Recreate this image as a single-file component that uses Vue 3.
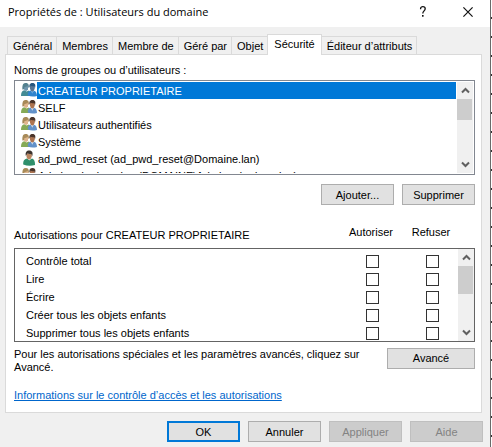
<script setup>
import { ref } from 'vue'

const tabs = ['Général', 'Membres', 'Membre de', 'Géré par', 'Objet', 'Sécurité', 'Éditeur d’attributs']
const activeTab = ref('Sécurité')

const principals = [
  { name: 'CREATEUR PROPRIETAIRE', kind: 'group' },
  { name: 'SELF', kind: 'group' },
  { name: 'Utilisateurs authentifiés', kind: 'group' },
  { name: 'Système', kind: 'group' },
  { name: 'ad_pwd_reset (ad_pwd_reset@Domaine.lan)', kind: 'user' },
  { name: 'Admins du domaine (DOMAINE\\Admins du domaine)', kind: 'group' },
]
const selected = ref(0)

const permissions = ref([
  { label: 'Contrôle total', allow: false, deny: false },
  { label: 'Lire', allow: false, deny: false },
  { label: 'Écrire', allow: false, deny: false },
  { label: 'Créer tous les objets enfants', allow: false, deny: false },
  { label: 'Supprimer tous les objets enfants', allow: false, deny: false },
])
</script>

<template>
  <div class="desktop">
    <main class="dialog">
      <header class="titlebar">
        <h1>Propriétés de : Utilisateurs du domaine</h1>
        <button class="caption" type="button" aria-label="Aide contextuelle">
          <svg width="10" height="14" viewBox="0 0 10 14"><path d="M2.6 4.2V3.6C2.6 2.3 3.6 1.7 4.8 1.7S7.2 2.4 7.2 3.8C7.2 5.9 4.8 6 4.8 8.6" fill="none" stroke="#111" stroke-width="1.3" /><rect x="4" y="10" width="1.6" height="1.7" fill="#111" /></svg>
        </button>
        <button class="caption close" type="button" aria-label="Fermer">
          <svg width="10" height="10" viewBox="0 0 10 10"><path d="M0.4 0.4L9.6 9.6M9.6 0.4L0.4 9.6" stroke="#111" stroke-width="1.2" /></svg>
        </button>
      </header>

      <div class="body">
        <div class="tabs" role="tablist">
          <button
            v-for="tab in tabs"
            :key="tab"
            class="tab"
            :class="{ active: tab === activeTab }"
            type="button"
            role="tab"
            :aria-selected="tab === activeTab"
            @click="activeTab = tab"
          >{{ tab }}</button>
        </div>

        <section class="panel">
          <p class="label" id="names">Noms de groupes ou d’utilisateurs :</p>
          <div class="box principals">
            <ul role="listbox" aria-labelledby="names">
              <li
                v-for="(p, i) in principals"
                :key="p.name"
                role="option"
                :aria-selected="i === selected"
                :class="{ selected: i === selected }"
                @click="selected = i"
              >
                <svg v-if="p.kind === 'group'" class="icon" width="16" height="16" viewBox="0 0 16 16">
                  <path class="g-body" d="M0 14C0 10.5 1 8.8 3.4 8.3L5.5 9.4L8 8.4L10 14H1Q0 14 0 14Z" />
                  <path class="g-face" d="M2.8 3.5H7V7.2Q6.4 8.9 5 8.9T2.8 7Z" />
                  <path class="g-hair" d="M1.4 7.4C1.2 3 2 1 4.8 1S8.2 3.2 7.8 6.3C7.2 5.5 6.8 4.5 6.5 3.7C5.4 4.8 4.2 5 3.4 5.1C3.4 6.8 3 7.8 1.4 7.4Z" />
                  <path class="b-body" d="M6.8 13.6C6.6 11 7.4 9.4 9.3 8.6L11.3 10L13.3 8.8C15.2 9.4 16 11.5 16 14Q11 15.2 6.8 13.6Z" />
                  <path class="b-shirt" d="M9.8 8.6L11.3 11.8L12.6 8.6Z" />
                  <path class="b-face" d="M9 3.6H13.7V6.8Q13 9.6 11.3 9.6T9 6.8Z" />
                  <path class="b-hair" d="M8.6 5.8C7.8 2.6 9.2 1 11.5 1C14.4 1 14.9 3.3 14 6.2L13.3 4.2Q11 4.2 9.6 3.7Z" />
                </svg>
                <svg v-else class="icon" width="16" height="16" viewBox="0 0 16 16">
                  <path fill="#2f8f6b" d="M2.2 14.5C2 11.4 3 9.3 5.8 8.6L8.6 10L11 8.6C13.4 9.4 14.2 12 14 15Q8 16.6 2.2 14.5Z" />
                  <path fill="#e7eee9" d="M6 8.2L8.4 10.6L9.6 8.2Z" />
                  <path fill="#b98560" d="M5.5 3.6H10.8V6.6Q10 9.6 8 9.6T5.5 6.6Z" />
                  <path fill="#3c332d" d="M4.9 6C4 2.2 5.6 0.4 8.2 0.4C11.4 0.4 12.2 2.8 11.2 6.2L10.3 3.9Q8 4.2 6.3 3.5Z" />
                </svg>
                <span>{{ p.name }}</span>
              </li>
            </ul>
            <div class="scrollbar">
              <button type="button" aria-label="Défiler vers le haut"><svg width="9" height="7" viewBox="0 0 9 7"><path d="M1 5.5L4.5 2L8 5.5" /></svg></button>
              <div class="thumb"></div>
              <button type="button" aria-label="Défiler vers le bas"><svg width="9" height="7" viewBox="0 0 9 7"><path d="M1 1.5L4.5 5L8 1.5" /></svg></button>
            </div>
          </div>

          <div class="actions">
            <button class="btn" type="button">Ajouter...</button>
            <button class="btn" type="button">Supprimer</button>
          </div>

          <div class="perm-head">
            <p>Autorisations pour {{ principals[selected].name }}</p>
            <span class="col">Autoriser</span>
            <span class="col">Refuser</span>
          </div>
          <div class="box permissions">
            <table>
              <tbody>
                <tr v-for="perm in permissions" :key="perm.label">
                  <th scope="row">{{ perm.label }}</th>
                  <td><input v-model="perm.allow" type="checkbox" :aria-label="`Autoriser : ${perm.label}`"></td>
                  <td><input v-model="perm.deny" type="checkbox" :aria-label="`Refuser : ${perm.label}`"></td>
                </tr>
              </tbody>
            </table>
            <div class="scrollbar">
              <button type="button" aria-label="Défiler vers le haut"><svg width="9" height="7" viewBox="0 0 9 7"><path d="M1 5.5L4.5 2L8 5.5" /></svg></button>
              <div class="thumb tall"></div>
              <button type="button" aria-label="Défiler vers le bas"><svg width="9" height="7" viewBox="0 0 9 7"><path d="M1 1.5L4.5 5L8 1.5" /></svg></button>
            </div>
          </div>

          <div class="advanced">
            <p>Pour les autorisations spéciales et les paramètres avancés, cliquez sur Avancé.</p>
            <button class="btn wide" type="button">Avancé</button>
          </div>
          <a class="info" href="#informations">Informations sur le contrôle d’accès et les autorisations</a>
        </section>
      </div>

      <footer class="footer">
        <button class="btn default" type="button">OK</button>
        <button class="btn" type="button">Annuler</button>
        <button class="btn" type="button" disabled>Appliquer</button>
        <button class="btn" type="button" disabled>Aide</button>
      </footer>
    </main>
    <div class="backdrop"></div>
  </div>
</template>

<style>
body {
  margin: 0;
}
</style>

<style scoped>
.desktop {
  display: flex;
  min-height: 100vh;
  font: 11px/14px "Liberation Sans", Arial, sans-serif;
  color: #000;
}
.desktop * {
  box-sizing: border-box;
}
.dialog {
  flex: 1;
  min-width: 0;
  display: flex;
  flex-direction: column;
  background: #f0f0f0;
  border-right: 1px solid #6a6a6a;
}
.backdrop {
  width: 1px;
  background: repeating-linear-gradient(#fff 0 17px, #333 17px 19px);
}
button {
  font: inherit;
  color: inherit;
  padding: 0;
  border: 0;
  border-radius: 0;
}
p,
h1,
ul {
  margin: 0;
  padding: 0;
}
.titlebar {
  display: flex;
  align-items: center;
  height: 27px;
  padding: 0 0 4px 8px;
  background: #fff;
}
.titlebar h1 {
  flex: 1;
  font: 11px/16px "Open Sans", "Noto Sans", sans-serif;
}
.caption {
  width: 45px;
  height: 22px;
  display: grid;
  place-items: center;
  background: none;
}
.body {
  padding: 7px 8px 0 5px;
}
.tabs {
  display: flex;
  align-items: flex-end;
  height: 20px;
  padding-left: 2px;
}
.tab {
  height: 18px;
  padding: 0 4px 0 5px;
  border: 1px solid #dadada;
  border-bottom: 0;
  margin-right: -1px;
  background: #f0f0f0;
  white-space: nowrap;
}
.tab.active {
  position: relative;
  height: 21px;
  margin-bottom: -1px;
  padding: 0 6px 3px;
  background: #fff;
}
.panel {
  padding: 8px 6px 10px 8px;
  border: 1px solid #dadada;
  background: #fff;
}
.label {
  height: 17px;
}
.box {
  display: flex;
  border: 1px solid #646464;
  background: #fff;
}
.principals {
  height: 95px;
  padding: 1px;
  border-color: #828790;
}
.principals ul {
  flex: 1;
  min-width: 0;
  overflow: hidden;
  list-style: none;
  padding-left: 5px;
}
.principals li {
  display: flex;
  height: 17px;
}
.principals li span {
  flex: 1;
  padding: 1px 0 0 1px;
  line-height: 17px;
  white-space: nowrap;
}
.principals li.selected span {
  background: #0078d7;
  color: #fff;
}
.icon {
  flex: none;
}
.g-body { fill: #86aa56; }
.g-face { fill: #dfb58d; }
.g-hair { fill: #a88a58; }
.b-body { fill: #6291c9; }
.b-shirt { fill: #dbe7f2; }
.b-face { fill: #ad7451; }
.b-hair { fill: #493329; }
.selected .g-body { fill: #438b94; }
.selected .g-face { fill: #6f96af; }
.selected .g-hair { fill: #54818f; }
.selected .b-body { fill: #3184cd; }
.selected .b-shirt { fill: #6eafe3; }
.selected .b-face { fill: #577593; }
.selected .b-hair { fill: #25557e; }
.scrollbar {
  flex: none;
  display: flex;
  flex-direction: column;
  width: 16px;
  margin-left: 1px;
  background: #f0f0f0;
}
.scrollbar button {
  height: 17px;
  display: grid;
  place-items: center;
  background: none;
}
.scrollbar button:last-child {
  margin-top: auto;
}
.scrollbar path {
  fill: none;
  stroke: #606060;
  stroke-width: 2;
}
.thumb {
  height: 21px;
  margin-right: 1px;
  background: #cdcdcd;
}
.thumb.tall {
  height: 28px;
}
.actions {
  display: flex;
  justify-content: flex-end;
  gap: 8px;
  margin-top: 9px;
}
.btn {
  flex: none;
  width: 73px;
  height: 21px;
  border: 1px solid #adadad;
  background: #e1e1e1;
}
.btn.wide {
  width: 88px;
}
.btn.default {
  border: 2px solid #0078d7;
}
.btn:disabled {
  border-color: #bfbfbf;
  background: #ccc;
  color: #838383;
}
.perm-head {
  display: flex;
  height: 43px;
  padding: 20px 14px 0 0;
}
.perm-head p {
  flex: 1;
  padding-top: 3px;
}
.col {
  width: 60px;
  text-align: center;
}
.permissions {
  height: 94px;
  overflow: hidden;
}
table {
  flex: 1;
  border-collapse: collapse;
  table-layout: fixed;
  height: 90px;
  margin-top: 3px;
}
tr {
  height: 18px;
}
th {
  padding: 0 0 0 11px;
  font-weight: normal;
  text-align: left;
}
td {
  width: 60px;
  padding: 0;
}
td:last-child {
  width: 31px;
}
td input {
  appearance: none;
  display: block;
  width: 13px;
  height: 13px;
  margin: 0;
  border: 1px solid #333;
  background: #fff;
}
td input:checked {
  background: #333;
  box-shadow: inset 0 0 0 2px #fff;
}
.advanced {
  display: flex;
  align-items: flex-start;
  justify-content: space-between;
  gap: 20px;
  margin-top: 6px;
  line-height: 13px;
}
.info {
  display: inline-block;
  margin-top: 14px;
  color: #0066cc;
}
.footer {
  display: flex;
  justify-content: flex-end;
  gap: 8px;
  padding: 8px 7px 5px;
}
</style>
